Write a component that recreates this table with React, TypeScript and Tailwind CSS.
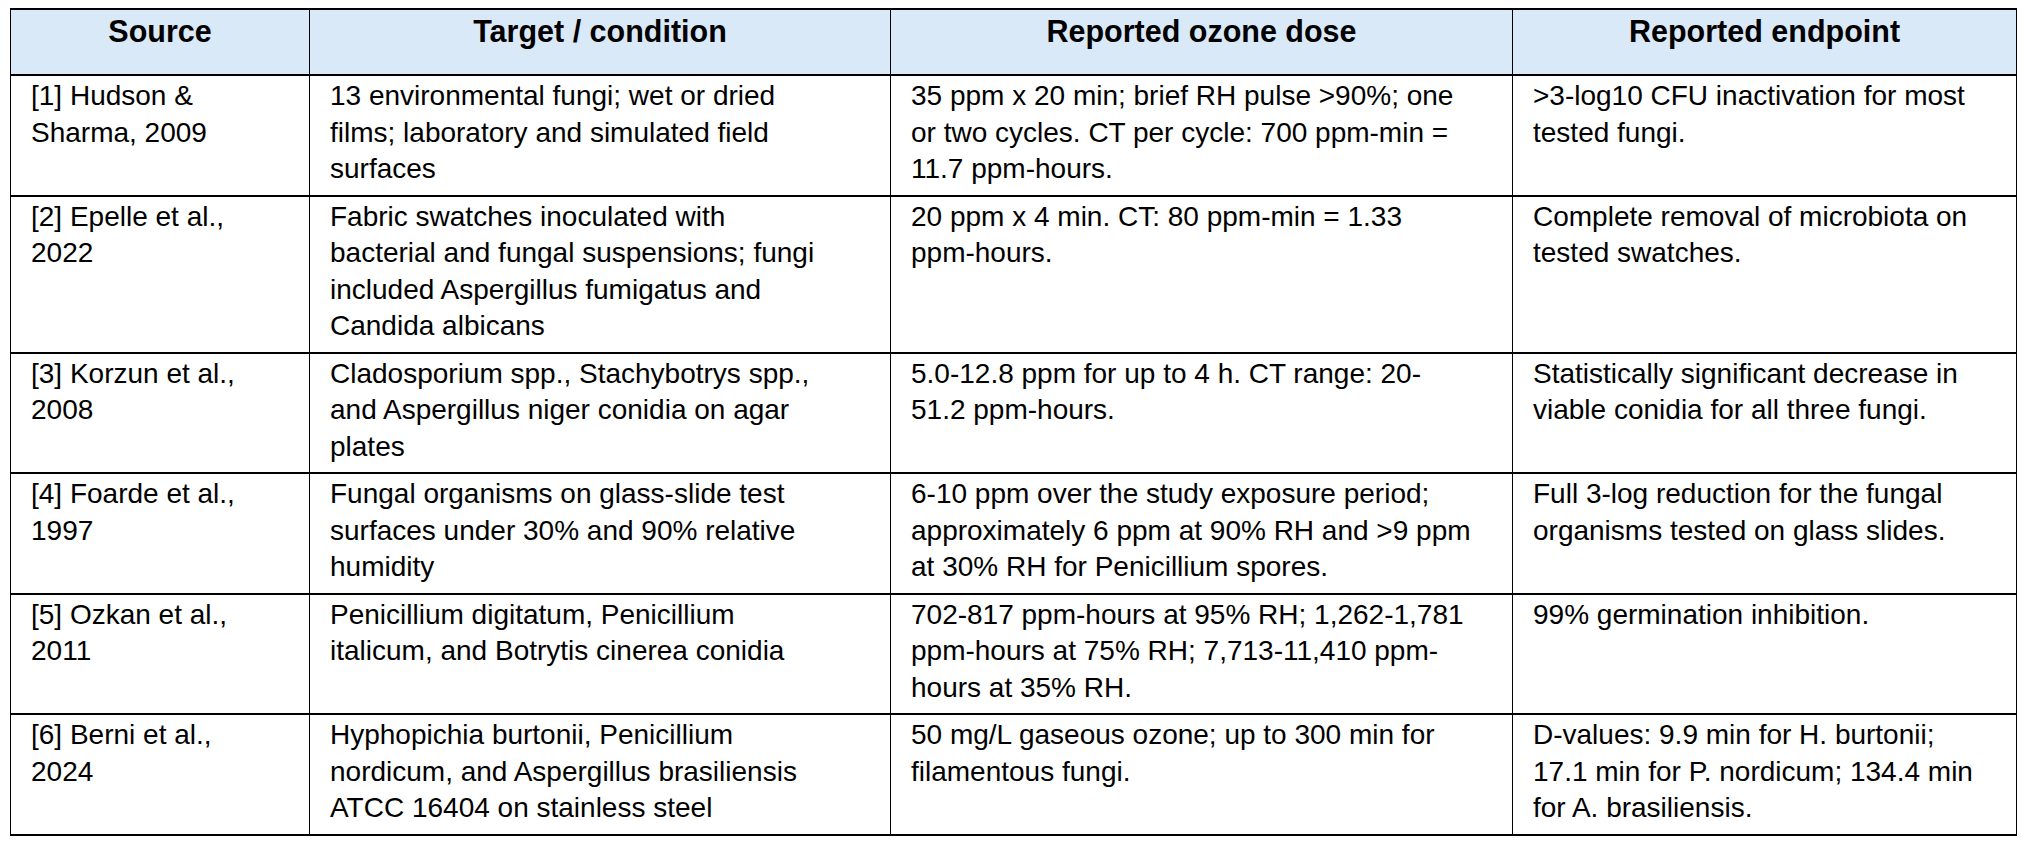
import React from "react";

const header = ["Source", "Target / condition", "Reported ozone dose", "Reported endpoint"];

const rows: string[][][] = [
  [
    ["[1] Hudson &", "Sharma, 2009"],
    ["13 environmental fungi; wet or dried", "films; laboratory and simulated field", "surfaces"],
    ["35 ppm x 20 min; brief RH pulse >90%; one", "or two cycles. CT per cycle: 700 ppm-min =", "11.7 ppm-hours."],
    [">3-log10 CFU inactivation for most", "tested fungi."],
  ],
  [
    ["[2] Epelle et al.,", "2022"],
    ["Fabric swatches inoculated with", "bacterial and fungal suspensions; fungi", "included Aspergillus fumigatus and", "Candida albicans"],
    ["20 ppm x 4 min. CT: 80 ppm-min = 1.33", "ppm-hours."],
    ["Complete removal of microbiota on", "tested swatches."],
  ],
  [
    ["[3] Korzun et al.,", "2008"],
    ["Cladosporium spp., Stachybotrys spp.,", "and Aspergillus niger conidia on agar", "plates"],
    ["5.0-12.8 ppm for up to 4 h. CT range: 20-", "51.2 ppm-hours."],
    ["Statistically significant decrease in", "viable conidia for all three fungi."],
  ],
  [
    ["[4] Foarde et al.,", "1997"],
    ["Fungal organisms on glass-slide test", "surfaces under 30% and 90% relative", "humidity"],
    ["6-10 ppm over the study exposure period;", "approximately 6 ppm at 90% RH and >9 ppm", "at 30% RH for Penicillium spores."],
    ["Full 3-log reduction for the fungal", "organisms tested on glass slides."],
  ],
  [
    ["[5] Ozkan et al.,", "2011"],
    ["Penicillium digitatum, Penicillium", "italicum, and Botrytis cinerea conidia"],
    ["702-817 ppm-hours at 95% RH; 1,262-1,781", "ppm-hours at 75% RH; 7,713-11,410 ppm-", "hours at 35% RH."],
    ["99% germination inhibition."],
  ],
  [
    ["[6] Berni et al.,", "2024"],
    ["Hyphopichia burtonii, Penicillium", "nordicum, and Aspergillus brasiliensis", "ATCC 16404 on stainless steel"],
    ["50 mg/L gaseous ozone; up to 300 min for", "filamentous fungi."],
    ["D-values: 9.9 min for H. burtonii;", "17.1 min for P. nordicum; 134.4 min", "for A. brasiliensis."],
  ],
];

export default function App() {
  return (
    <div
      className="w-[2042px] h-[852px] bg-white pt-[8px] pl-[10px]"
      style={{ fontFamily: '"Liberation Sans", Arial, sans-serif' }}
    >
      <table className="w-[2006px] table-fixed border-collapse text-black">
        <colgroup>
          <col className="w-[299px]" />
          <col className="w-[581px]" />
          <col className="w-[622px]" />
          <col className="w-[504px]" />
        </colgroup>
        <thead>
          <tr className="h-[66px] bg-[#dae9f7]">
            {header.map((h) => (
              <th
                key={h}
                className="border-x border-y-2 border-black align-top pt-[3px] text-center text-[30.5px] leading-[36px] font-bold"
              >
                {h}
              </th>
            ))}
          </tr>
        </thead>
        <tbody>
          {rows.map((r, i) => (
            <tr key={i}>
              {r.map((cell, j) => (
                <td
                  key={j}
                  className="border-x border-y-2 border-black align-top pl-[20px] pr-[4px] pt-[2px] pb-[7px] text-left text-[28px] leading-[36.5px] font-normal"
                >
                  {cell.map((line, k) => (
                    <div key={k} className="whitespace-nowrap">
                      {line}
                    </div>
                  ))}
                </td>
              ))}
            </tr>
          ))}
        </tbody>
      </table>
    </div>
  );
}
